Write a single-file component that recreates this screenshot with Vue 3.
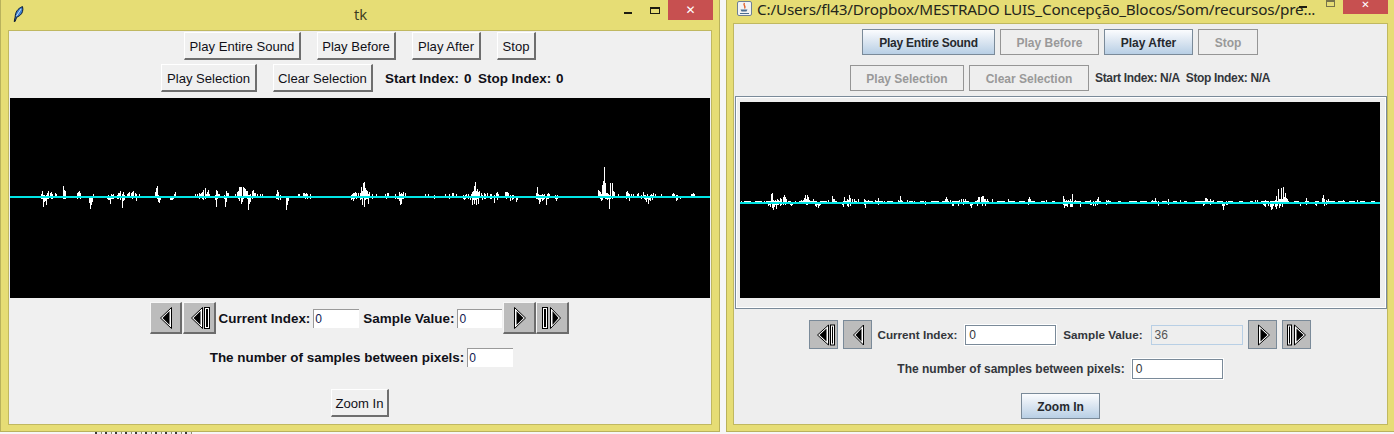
<script setup>
const leftSpikes = [
[41,2,2],[42,5,2],[43,1,10],[44,1,5],[45,0,4],[46,1,8],[47,3,2],[48,5,2],[50,3,1],[51,4,2],[52,2,2],[55,3,1],[56,2,1],[63,10,2],[64,6,2],[65,5,2],
[77,3,2],[78,4,1],[79,5,1],[80,3,2],[89,0,6],[90,0,12],[91,0,8],[92,0,5],[93,2,1],[107,0,2],[108,1,3],[109,0,3],[110,0,7],[111,2,2],[112,1,2],[113,2,2],[117,1,2],[118,3,2],[119,3,1],[120,5,3],[122,2,11],[123,4,4],[124,1,3],[127,2,1],[128,3,1],[129,4,1],[131,3,1],[132,4,2],[133,5,1],[135,3,1],[136,2,4],[139,2,1],
[155,4,1],[156,8,1],[157,10,2],[158,1,5],[159,0,6],[160,0,3],[170,0,3],[171,0,3],[172,0,3],[173,0,2],[174,2,1],[175,4,0],
[195,2,1],[197,2,1],[199,3,2],[200,2,1],[201,3,1],[202,4,2],[203,6,3],[205,8,2],[206,2,1],[207,4,1],[208,6,1],[209,2,1],[215,1,3],[216,6,10],[217,5,2],[218,2,1],[219,2,1],
[224,1,2],[225,0,10],[226,5,5],[227,3,1],[228,3,1],[235,2,1],[237,4,1],[238,5,2],[239,9,4],[240,9,1],[241,9,7],[242,0,5],[243,9,2],[244,8,1],[245,7,1],[246,5,1],[247,5,2],[248,1,13],[249,1,7],[250,2,5],[252,5,2],[253,6,1],[254,3,1],[255,3,1],[257,2,1],[260,2,1],[262,2,1],
[276,2,2],[277,6,2],[278,4,3],[280,1,3],[286,0,13],[287,0,8],[288,0,4],[298,2,1],[299,2,1],[303,3,1],[304,3,1],[305,2,2],[306,3,1],[307,2,2],[310,2,2],
[351,1,3],[352,2,2],[353,3,4],[354,3,2],[355,4,0],[356,3,2],[358,3,1],[360,3,3],[361,9,2],[362,5,8],[363,13,1],[364,14,10],[365,8,3],[366,6,2],[367,5,2],[368,2,7],[369,4,1],[372,2,2],[376,2,1],[385,2,1],[386,0,2],[387,3,1],[388,3,1],[395,2,2],[397,0,2],[398,0,2],[399,4,4],[400,2,8],[401,3,7],[402,2,2],[403,4,2],[405,3,1],
[425,2,1],[428,2,1],[434,1,2],[445,2,1],[449,2,2],[452,3,1],[453,3,1],[456,2,1],[463,1,2],[464,0,3],[465,1,2],[466,2,1],[468,2,2],[470,0,3],[471,2,1],[472,4,8],[473,5,3],[474,10,7],[475,14,3],[476,5,8],[477,7,2],[478,4,7],[479,5,1],[481,3,1],[482,1,3],[484,3,2],[485,2,2],[487,3,1],[490,2,2],[491,2,2],[494,1,6],[496,3,1],[497,4,3],[498,2,1],
[505,4,1],[506,4,2],[507,4,1],[508,3,1],[510,1,4],[512,1,3],[513,1,2],[516,0,5],[517,0,3],
[536,3,2],[537,9,2],[538,2,3],[539,1,7],[540,1,5],[541,1,2],[542,2,4],[543,1,3],[544,2,2],[546,0,8],[547,2,2],[548,3,2],[549,2,1],[555,1,2],[556,0,4],[557,1,2],
[598,6,1],[599,5,1],[600,4,2],[601,2,4],[602,11,3],[603,15,1],[604,29,1],[605,13,2],[606,3,2],[607,3,3],[608,2,2],[609,1,12],[610,13,2],[612,13,2],[613,5,1],[614,4,1],[618,2,1],[626,4,2],[627,5,1],[628,3,1],[629,2,4],[631,2,1],[633,2,1],[637,2,1],[638,3,1],
[641,1,2],[643,4,1],[644,1,2],[645,1,3],[646,0,5],[647,2,2],[648,0,7],[649,0,3],[650,1,4],[651,2,1],[652,1,3],[653,3,1],[655,2,1],[661,2,1],[672,2,1],[673,3,1],[674,2,1],[676,1,4],[677,1,3],[680,0,2],[691,2,1],[692,2,1],[693,3,1],[694,2,1]
]
const rightSpikes = [
[741,1,0],[745,1,0],[749,1,0],[755,1,0],[761,1,0],[764,1,0],[768,0,3],[769,1,2],[770,0,4],[771,8,0],[772,9,5],[773,2,7],[774,1,4],[775,2,2],[776,1,6],[777,3,2],[778,2,2],[780,4,3],[781,3,2],[783,5,2],[784,7,0],[785,5,2],[786,3,0],[790,1,2],[791,0,3],[792,0,2],[795,1,0],[801,2,0],[803,2,0],[804,4,0],[805,7,0],[806,3,2],[807,7,2],[808,5,0],[809,2,0],[813,3,0],[815,1,3],[816,0,4],[817,0,2],[818,0,5],[819,0,3],[820,1,2],
[828,2,0],[832,6,0],[833,3,0],[834,3,0],[842,0,2],[843,0,4],[844,5,0],[847,3,3],[848,2,4],[849,7,0],[850,4,3],[852,3,0],[854,3,0],[858,3,0],[864,3,2],[865,2,5],[868,2,0],
[875,2,0],[878,4,2],[884,1,0],[891,1,0],[898,2,0],[900,6,0],[901,2,0],[907,2,0],[914,1,0],[923,1,0],[925,1,2],
[945,3,0],[946,5,0],[947,3,0],[950,2,0],[952,1,3],[953,0,3],[958,0,3],[959,2,0],[961,3,0],[963,3,2],[965,3,0],[970,0,3],[971,0,5],[972,0,2],[977,2,3],[978,5,0],[979,5,0],[981,5,0],[982,6,3],[983,6,0],[984,3,0],[985,3,3],[987,3,0],[992,3,0],[1008,3,0],
[1028,3,2],[1029,5,0],[1030,3,0],[1046,2,0],
[1063,6,2],[1064,3,5],[1065,1,3],[1066,2,3],[1067,0,4],[1068,2,0],[1070,3,4],[1071,1,4],[1072,8,4],[1075,2,0],[1080,1,4],
[1090,2,2],[1091,0,2],[1093,1,3],[1095,1,3],[1097,3,2],[1098,5,0],[1106,2,2],[1108,2,0],
[1152,2,0],[1155,4,0],[1158,1,3],[1168,3,2],[1180,2,0],
[1203,1,3],[1204,1,2],[1205,4,0],[1206,4,0],[1207,3,0],[1210,3,2],[1213,2,0],[1222,0,3],[1223,0,7],[1224,0,3],[1226,1,2],[1227,0,2],
[1255,2,0],[1257,2,0],[1263,0,2],[1264,1,3],[1265,2,4],[1268,1,3],[1270,1,4],[1271,1,7],[1272,1,6],[1273,1,3],[1275,2,4],[1276,6,6],[1277,1,3],[1278,13,0],[1279,3,5],[1280,3,3],[1281,14,0],[1282,3,4],[1283,15,0],[1284,5,0],[1285,9,0],[1286,4,0],[1287,3,0],
[1300,0,3],[1306,4,2],[1315,1,2],[1316,1,3],[1322,4,0],[1323,7,0],[1324,3,3],[1326,2,2],[1328,3,0],[1343,2,0],[1357,2,0]
]
function wavePath(spikes, originX, mid) {
  return spikes.map(([x, up, down]) => {
    const px = x - originX + 0.5
    return `M${px} ${mid - up}V${mid + down + 1}`
  }).join('')
}
function runs(width, mid) {
  let d = ''
  for (let x = 4; x < width; x += 11) {
    const len = 3 + ((x * 7) % 6)
    d += `M${x} ${mid - 0.5}h${len}`
  }
  return d
}
const leftWave = wavePath(leftSpikes, 10, 98)
const rightWave = wavePath(rightSpikes, 740, 100)
const rightRuns = runs(640, 100)
const leftRow1 = [
  { label: 'Play Entire Sound', w: 117 },
  { label: 'Play Before', w: 79 },
  { label: 'Play After', w: 69 },
  { label: 'Stop', w: 39 }
]
const rightRow1 = [
  { label: 'Play Entire Sound', w: 133, on: true, tight: true },
  { label: 'Play Before', w: 99, on: false },
  { label: 'Play After', w: 89, on: true },
  { label: 'Stop', w: 60, on: false }
]
</script>

<template>
  <div class="desktop">
    <section class="window tk">
      <header class="titlebar tk-bar">
        <svg class="feather" width="11" height="16" viewBox="0 0 11 16">
          <path d="M1.2 15.5 L2.2 11 C2.2 6.5 4.5 2.5 9.5 0.6 C10.5 4 9.5 7.5 6.8 9.5 L3.6 11.4 L2 15.6Z" fill="#3d7fd0" stroke="#0b1a33" stroke-width="1"/>
          <path d="M3.5 10 L8 3" stroke="#c6e0f8" stroke-width="1" fill="none"/>
        </svg>
        <span class="tk-title">tk</span>
        <div class="controls">
          <i class="min"></i><i class="max"></i>
          <span class="close">✕</span>
        </div>
      </header>
      <div class="panel tk-panel">
        <div class="row r1">
          <button v-for="b in leftRow1" :key="b.label" class="tkbtn" :style="{ width: b.w + 'px' }">{{ b.label }}</button>
        </div>
        <div class="row r2">
          <button class="tkbtn w96">Play Selection</button>
          <button class="tkbtn w100">Clear Selection</button>
          <div class="tk-index">
            <b class="tk-start">Start Index:</b><b class="tk-val">0</b><b class="tk-stop">Stop Index:</b><b class="tk-end">0</b>
          </div>
        </div>
        <div class="canvas tk-canvas">
          <svg width="700" height="200" viewBox="0 0 700 200" shape-rendering="crispEdges">
            <path :d="leftWave" stroke="#fff" fill="none"/>
            <rect x="0" y="98" width="700" height="2" fill="#00e5e5"/>
          </svg>
        </div>
        <div class="row tk-ctrl">
          <button class="icobtn w32"><svg width="24" height="24" viewBox="0 0 24 24"><path d="M18.5 1.5V22.5L7.5 12Z" fill="#fff" stroke="#000"/><path d="M16.5 5V19L9.5 12Z" fill="#000"/></svg></button>
          <button class="icobtn g1"><svg width="24" height="24" viewBox="0 0 24 24"><path d="M15.5 1.5V22.5L4.5 12Z" fill="#fff" stroke="#000"/><path d="M13.5 5V19L6.5 12Z" fill="#000"/><rect x="17.5" y="1.5" width="5" height="21" fill="#fff" stroke="#000"/><rect x="19" y="3" width="2" height="18" fill="#000"/></svg></button>
          <b class="tk-lab m3">Current Index:</b>
          <span class="tk-input w46 m3">0</span>
          <b class="tk-lab m4">Sample Value:</b>
          <span class="tk-input w45 m3">0</span>
          <button class="icobtn m1"><svg width="24" height="24" viewBox="0 0 24 24"><path d="M7.5 1.5V22.5L18.5 12Z" fill="#fff" stroke="#000"/><path d="M9.5 5V19L16.5 12Z" fill="#000"/></svg></button>
          <button class="icobtn"><svg width="24" height="24" viewBox="0 0 24 24"><rect x="2.5" y="1.5" width="5" height="21" fill="#fff" stroke="#000"/><rect x="4" y="3" width="2" height="18" fill="#000"/><path d="M10.5 1.5V22.5L20.5 12Z" fill="#fff" stroke="#000"/><path d="M12.5 5V19L18.5 12Z" fill="#000"/></svg></button>
        </div>
        <div class="row tk-samples">
          <b class="tk-lab">The number of samples between pixels:</b>
          <span class="tk-input w46 m3">0</span>
        </div>
        <div class="row tk-zoom">
          <button class="tkbtn w58">Zoom In</button>
        </div>
      </div>
    </section>

    <section class="window jv">
      <header class="titlebar jv-bar">
        <svg class="java" width="15" height="15" viewBox="0 0 15 15">
          <rect x="0.5" y="0.5" width="14" height="14" rx="1.5" fill="#f3f3f3" stroke="#6d7f94"/>
          <path d="M7.5 2C5.5 4.5 9.5 5 7.5 7.5" stroke="#e2632c" stroke-width="1.4" fill="none"/>
          <path d="M3.5 8.5h7l-1 2H4.5Z" fill="#4a6e92"/>
          <path d="M3 12.5h9" stroke="#4a6e92" stroke-width="1"/>
        </svg>
        <span class="jv-title">C:/Users/fl43/Dropbox/MESTRADO LUIS_Concepção_Blocos/Som/recursos/pre...</span>
        <div class="controls jv-controls">
          <i class="min"></i><i class="max"></i>
          <span class="close">✕</span>
        </div>
      </header>
      <div class="panel jv-panel">
        <div class="row jr1">
          <button v-for="b in rightRow1" :key="b.label" class="jbtn" :class="[b.on ? 'on' : 'off', { tight: b.tight }]" :style="{ width: b.w + 'px' }">{{ b.label }}</button>
        </div>
        <div class="row jr2">
          <button class="jbtn off w114">Play Selection</button>
          <button class="jbtn off w120">Clear Selection</button>
          <b class="jlab jidx">Start Index: N/A</b>
          <b class="jlab jidx">Stop Index: N/A</b>
        </div>
        <div class="jframe">
          <svg width="640" height="196" viewBox="0 0 640 196" shape-rendering="crispEdges">
            <rect width="640" height="196" fill="#000"/>
            <path :d="rightRuns" stroke="#fff" fill="none"/>
            <path :d="rightWave" stroke="#fff" fill="none"/>
            <rect x="0" y="100" width="640" height="2" fill="#00e5e5"/>
          </svg>
        </div>
        <div class="row jctrl">
          <button class="jico"><svg width="24" height="24" viewBox="0 0 24 24"><path d="M16.5 2V22L5.5 12Z" fill="#fff" stroke="#000"/><path d="M14.5 5.5V18.5L7.5 12Z" fill="#000"/><rect x="18.5" y="2" width="4" height="20" fill="#fff" stroke="#000"/><rect x="20" y="3.5" width="1" height="17" fill="#000"/></svg></button>
          <button class="jico"><svg width="24" height="24" viewBox="0 0 24 24"><path d="M17.5 2V22L7.5 12Z" fill="#fff" stroke="#000"/><path d="M15.5 5.5V18.5L9.5 12Z" fill="#000"/></svg></button>
          <b class="jlab jn">Current Index:</b>
          <span class="jinput l3 w91">0</span>
          <b class="jlab jn l2">Sample Value:</b>
          <span class="jinput dis l3">36</span>
          <button class="jico"><svg width="24" height="24" viewBox="0 0 24 24"><path d="M8.5 2V22L19.5 12Z" fill="#fff" stroke="#000"/><path d="M10.5 5.5V18.5L17.5 12Z" fill="#000"/></svg></button>
          <button class="jico"><svg width="24" height="24" viewBox="0 0 24 24"><rect x="3.5" y="2" width="4" height="20" fill="#fff" stroke="#000"/><rect x="5" y="3.5" width="1" height="17" fill="#000"/><path d="M10.5 2V22L21.5 12Z" fill="#fff" stroke="#000"/><path d="M12.5 5.5V18.5L19.5 12Z" fill="#000"/></svg></button>
        </div>
        <div class="row jsamples">
          <b class="jlab">The number of samples between pixels:</b>
          <span class="jinput l2 w91">0</span>
        </div>
        <div class="row jzoom">
          <button class="jbtn on w79">Zoom In</button>
        </div>
      </div>
    </section>
    <span class="taskbar-bits"></span>
  </div>
</template>

<style>
html, body { margin: 0; background: #fff; overflow: hidden; }
</style>

<style scoped>
.desktop { position: relative; display: flex; gap: 6px; width: 1394px; height: 434px; background: #f6f6f6; overflow: hidden; font-family: "Liberation Sans", Arial, sans-serif; }
.taskbar-bits { position: absolute; left: 95px; top: 432px; width: 100px; height: 2px; background: repeating-linear-gradient(90deg, #3a3a3a 0 2px, #e8e8e8 2px 6px, #8a8f70 6px 7px, #f6f6f6 7px 10px); }
.window { background: #e6dd75; box-sizing: border-box; flex: none; display: flex; flex-direction: column; }
.tk { width: 720px; height: 432px; border-left: 1px solid #b9b25c; border-right: 1px solid #b9b25c; border-bottom: 1px solid #b9b25c; padding: 0 7px 6px 7px; }
.jv { width: 668px; height: 432px; border-left: 1px solid #b9b25c; border-bottom: 1px solid #b9b25c; padding: 0 6px 6px 6px; }
.titlebar { display: flex; align-items: flex-start; position: relative; flex: none; }
.tk-bar { height: 30px; }
.jv-bar { height: 23px; }
.feather { margin: 6px 0 0 5px; }
.tk-title { position: absolute; left: 346px; top: 4px; font: 15px/20px "Open Sans", sans-serif; color: #3b3a20; }
.java { margin: 1px 0 0 4px; }
.jv-title { margin-left: 5px; font: 15.3px/18px "Noto Sans", sans-serif; color: #24261c; white-space: nowrap; letter-spacing: -0.18px; }
.controls { position: absolute; right: -1px; top: 0; display: flex; align-items: flex-start; }
.close { width: 45px; height: 20px; background: #c75050; color: #fff; font: bold 12px/20px "DejaVu Sans", sans-serif; text-align: center; }
.min { width: 8px; height: 2px; background: #1d1d10; margin: 12px 18px 0 0; }
.max { width: 8px; height: 4px; border: 1px solid #1d1d10; border-top-width: 2px; margin: 7px 8px 0 0; }
.jv-controls { right: 0; }
.jv-controls .close { height: 14px; line-height: 9px; font-size: 10px; }
.jv-controls .min { margin: 6px 19px 0 0; }
.jv-controls .max { border-color: #77734a; margin-top: 0; width: 7px; }
.panel { background: #f0f0f0; flex: 1; border: 1px solid #c0b860; box-sizing: border-box; display: flex; flex-direction: column; }
.jv-panel { background: #eeeeee; }
.row { display: flex; justify-content: center; align-items: center; flex: none; }

.tkbtn { box-sizing: border-box; height: 28px; padding: 1px 0 0; background: #f0f0f0; font: 13.1px "Liberation Sans", Arial, sans-serif; color: #101018; border: solid; border-width: 1px 2px 2px 1px; border-color: #fff #6e6e6e #6e6e6e #fff; }
.r1 { margin-top: 1px; height: 28px; gap: 16px; }
.r2 { margin-top: 4px; height: 28px; padding-left: 4px; gap: 16px; }
.w96 { width: 96px; }
.w100 { width: 100px; }
.w58 { width: 58px; }
.tk-index { display: flex; margin-left: -4px; font-size: 13.45px; color: #101018; }
.tk-start { width: 79px; }
.tk-stop { width: 78px; }
.tk-val { width: 14px; }
.tk-end { width: 7px; }
.canvas { background: #000; height: 200px; flex: none; }
.canvas svg { display: block; }
.tk-canvas { margin: 6px 1px 0 1px; }
.tk-ctrl { margin-top: 4px; height: 32px; padding-right: 1px; }
.icobtn { box-sizing: border-box; width: 33px; height: 32px; padding: 0; display: flex; align-items: center; justify-content: center; background: #bcbcbc; border: solid; border-width: 1px 2px 2px 1px; border-color: #f7f7f7 #6c6c6c #6c6c6c #f7f7f7; }
.w32 { width: 32px; }
.g1 { margin-left: 1px; }
.tk-lab { font-size: 13.45px; color: #101018; white-space: nowrap; }
.m1 { margin-left: 1px; }
.m3 { margin-left: 3px; }
.m4 { margin-left: 4px; }
.tk-input { box-sizing: border-box; background: #fff; height: 19px; border-top: 1px solid #9a9a9a; border-left: 1px solid #9a9a9a; font: 12px/18px "Liberation Sans", Arial, sans-serif; color: #102050; padding-left: 1px; }
.w46 { width: 46px; }
.w45 { width: 45px; }
.tk-samples { margin-top: 14px; height: 19px; padding-left: 3px; }
.tk-zoom { margin-top: 22px; }

.jbtn { box-sizing: border-box; height: 26px; padding: 1px 0 0; font: bold 12px "Liberation Sans", Arial, sans-serif; border: 1px solid #7a8a99; }
.jbtn.tight { letter-spacing: -0.25px; }
.jbtn.on { background: linear-gradient(#fbfcfe, #dde7f2 45%, #b8cfe5); color: #26292e; }
.jbtn.off { background: #eeeeee; color: #999; border-color: #959595; }
.w114 { width: 114px; }
.w120 { width: 120px; }
.w79 { width: 79px; }
.jr1 { margin-top: 5px; height: 26px; gap: 5px; padding-right: 1px; }
.jr2 { margin-top: 10px; height: 26px; gap: 5px; justify-content: flex-start; padding-left: 116px; }
.jlab { font-size: 12px; color: #33363b; white-space: nowrap; }
.jidx { margin-left: 1px; letter-spacing: -0.33px; }
.jn { font-size: 11.7px; }
.jframe { margin: 5px 0 0 1px; box-sizing: border-box; width: 652px; height: 213px; border: 1px solid #7a8a99; box-shadow: inset 0 0 0 1px #fff; padding: 5px 0 0 4px; flex: none; }
.jframe svg { display: block; }
.jctrl { margin-top: 11px; height: 29px; gap: 5px; padding-right: 1px; }
.jico { box-sizing: border-box; width: 29px; height: 29px; padding: 0; display: flex; align-items: center; justify-content: center; background: #bcbcbc; border: 1px solid #7a8a99; }
.jinput { box-sizing: border-box; width: 92px; height: 20px; background: #fff; border: 1px solid #7a8a99; box-shadow: 0 0 0 1px #fff; font: 12px/18px "Liberation Sans", Arial, sans-serif; color: #33363b; padding-left: 3px; }
.jinput.w91 { width: 91px; }
.jinput.dis { background: #eeeeee; border-color: #b8cfe5; box-shadow: none; color: #555; }
.l2 { margin-left: 2px; }
.l3 { margin-left: 3px; }
.jsamples { margin-top: 10px; height: 20px; gap: 5px; padding-right: 1px; }
.jzoom { margin-top: 14px; }
</style>
